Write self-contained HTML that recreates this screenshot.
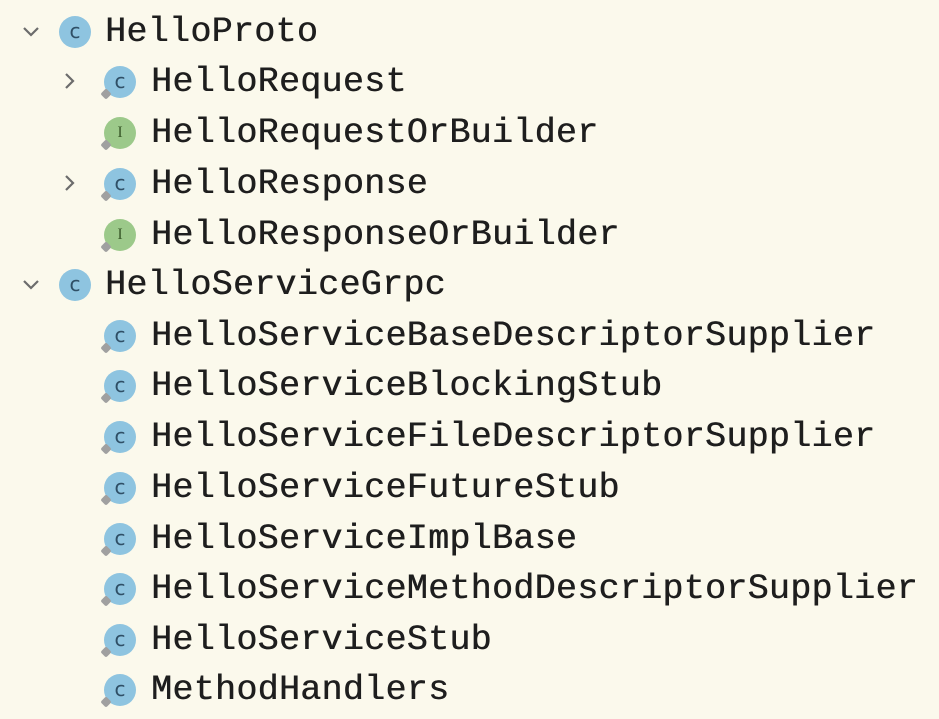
<!DOCTYPE html>
<html><head><style>
body{margin:0;width:939px;height:719px;background:#fbf9ec;overflow:hidden;font-family:"Liberation Mono",monospace;}
.r{position:absolute;height:50px;left:0;}
.t{position:absolute;top:0;font-size:35px;line-height:50px;color:#1e1e1e;white-space:nowrap;letter-spacing:0.3px;text-shadow:0.5px 0 0 #1e1e1e;}
.ic{position:absolute;top:9px;width:32px;height:32px;border-radius:50%;background:#8ec4e0;color:#2f4f66;font:20px "DejaVu Sans",sans-serif;text-align:center;line-height:30px;}
.ic.i{background:#9cc98a;color:#3a5a2a;font:16px "Liberation Serif",serif;line-height:32px;}
.ic.p::before{content:"";position:absolute;left:-2px;bottom:0px;width:8px;height:8px;background:#a0a0a0;transform:rotate(45deg);border-radius:2px;}
svg.ar{position:absolute;top:17px;}
</style></head><body>
<div class="r" style="top:7px"><svg class="ar" style="left:22px" width="18" height="14"><path d="M2 4 L9 11 L16 4" fill="none" stroke="#6c6c6c" stroke-width="2.2"/></svg><div class="ic" style="left:59px">c</div><span class="t" style="left:105px">HelloProto</span></div>
<div class="r" style="top:57px"><svg class="ar" style="left:62px;top:15px" width="14" height="18"><path d="M4 2 L11 9 L4 16" fill="none" stroke="#6c6c6c" stroke-width="2.2"/></svg><div class="ic p" style="left:104px">c</div><span class="t" style="left:151px">HelloRequest</span></div>
<div class="r" style="top:108px"><div class="ic i p" style="left:104px">I</div><span class="t" style="left:151px">HelloRequestOrBuilder</span></div>
<div class="r" style="top:159px"><svg class="ar" style="left:62px;top:15px" width="14" height="18"><path d="M4 2 L11 9 L4 16" fill="none" stroke="#6c6c6c" stroke-width="2.2"/></svg><div class="ic p" style="left:104px">c</div><span class="t" style="left:151px">HelloResponse</span></div>
<div class="r" style="top:210px"><div class="ic i p" style="left:104px">I</div><span class="t" style="left:151px">HelloResponseOrBuilder</span></div>
<div class="r" style="top:260px"><svg class="ar" style="left:22px" width="18" height="14"><path d="M2 4 L9 11 L16 4" fill="none" stroke="#6c6c6c" stroke-width="2.2"/></svg><div class="ic" style="left:59px">c</div><span class="t" style="left:105px">HelloServiceGrpc</span></div>
<div class="r" style="top:311px"><div class="ic p" style="left:104px">c</div><span class="t" style="left:151px">HelloServiceBaseDescriptorSupplier</span></div>
<div class="r" style="top:361px"><div class="ic p" style="left:104px">c</div><span class="t" style="left:151px">HelloServiceBlockingStub</span></div>
<div class="r" style="top:412px"><div class="ic p" style="left:104px">c</div><span class="t" style="left:151px">HelloServiceFileDescriptorSupplier</span></div>
<div class="r" style="top:463px"><div class="ic p" style="left:104px">c</div><span class="t" style="left:151px">HelloServiceFutureStub</span></div>
<div class="r" style="top:514px"><div class="ic p" style="left:104px">c</div><span class="t" style="left:151px">HelloServiceImplBase</span></div>
<div class="r" style="top:564px"><div class="ic p" style="left:104px">c</div><span class="t" style="left:151px">HelloServiceMethodDescriptorSupplier</span></div>
<div class="r" style="top:615px"><div class="ic p" style="left:104px">c</div><span class="t" style="left:151px">HelloServiceStub</span></div>
<div class="r" style="top:665px"><div class="ic p" style="left:104px">c</div><span class="t" style="left:151px">MethodHandlers</span></div>
</body></html>
